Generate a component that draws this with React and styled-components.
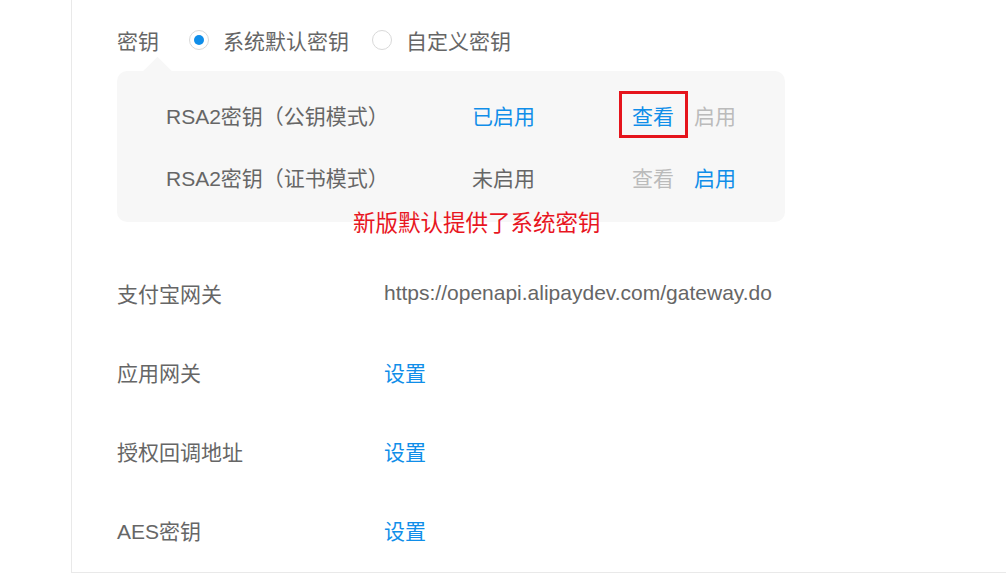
import React from "react";
import styled, { createGlobalStyle } from "styled-components";

const GlobalStyle = createGlobalStyle`
  html, body {
    margin: 0;
    padding: 0;
    background: #fff;
  }
  body {
    font-family: "Liberation Sans", "Noto Sans CJK SC", sans-serif;
    color: #666;
    overflow: hidden;
  }
`;

const Page = styled.div`
  width: 1006px;
  height: 582px;
  overflow: hidden;
`;

const Card = styled.section`
  margin-left: 71px;
  width: 1000px;
  border-left: 1px solid #e9e9e9;
  border-bottom: 1px solid #e9e9e9;
  padding: 25px 0 0 45px;
  box-sizing: border-box;
  height: 573px;
`;

const KeyRow = styled.div`
  display: flex;
  align-items: center;
  height: 30px;
  font-size: 21px;
`;

const Label = styled.span`
  font-size: 21px;
  color: #666;
  width: ${(p) => p.$width || "auto"};
  flex-shrink: 0;
`;

const RadioGroup = styled.div`
  display: flex;
  align-items: center;
  gap: 23px;
  margin-left: 30px;
`;

const RadioOption = styled.label`
  display: flex;
  align-items: center;
  gap: 14px;
  font-size: 21px;
  color: #666;
`;

const RadioCircle = styled.span`
  width: 20px;
  height: 20px;
  box-sizing: border-box;
  border: 1px solid #d9d9d9;
  border-radius: 50%;
  background: #fff;
  display: flex;
  align-items: center;
  justify-content: center;

  &::after {
    content: "";
    width: 10px;
    height: 10px;
    border-radius: 50%;
    background: ${(p) => (p.$checked ? "#108ee9" : "transparent")};
  }
`;

const KeyPanel = styled.div`
  position: relative;
  margin-top: 16px;
  width: 668px;
  height: 151px;
  box-sizing: border-box;
  padding: 13px 0 0 49px;
  background: #f7f7f7;
  border-radius: 10px;

  &::before {
    content: "";
    position: absolute;
    top: -10px;
    left: 30px;
    width: 21px;
    height: 21px;
    background: #f7f7f7;
    transform: rotate(45deg);
  }
`;

const KeyItem = styled.div`
  position: relative;
  display: grid;
  grid-template-columns: 306px 160px auto;
  align-items: center;
  height: 62px;
  font-size: 21px;
`;

const Status = styled.span`
  color: ${(p) => (p.$on ? "#108ee9" : "#666")};
`;

const Actions = styled.div`
  display: flex;
  align-items: center;
  gap: 20px;
`;

const Action = styled.span`
  position: relative;
  color: ${(p) => (p.$disabled ? "#bbb" : "#108ee9")};

  &::after {
    content: "";
    display: ${(p) => (p.$marked ? "block" : "none")};
    position: absolute;
    left: -13px;
    right: -14px;
    top: -9px;
    bottom: -8px;
    border: 3px solid #e5141c;
  }
`;

const Note = styled.span`
  position: absolute;
  left: 236px;
  top: 142px;
  font-size: 22.5px;
  line-height: 22px;
  color: #e8161f;
  white-space: nowrap;
`;

const InfoList = styled.div`
  margin-top: 31px;
`;

const InfoRow = styled.div`
  display: flex;
  align-items: center;
  height: 79px;
`;

const Value = styled.span`
  font-size: 21px;
  color: ${(p) => (p.$link ? "#108ee9" : "#666")};
`;

const keys = [
  { name: "RSA2密钥（公钥模式）", on: true },
  { name: "RSA2密钥（证书模式）", on: false },
];

const infos = [
  { label: "支付宝网关", value: "https://openapi.alipaydev.com/gateway.do" },
  { label: "应用网关", value: "设置", link: true },
  { label: "授权回调地址", value: "设置", link: true },
  { label: "AES密钥", value: "设置", link: true },
];

const App = () => {
  return (
    <Page>
      <GlobalStyle />
      <Card>
        <KeyRow>
          <Label>密钥</Label>
          <RadioGroup>
            <RadioOption>
              <RadioCircle $checked />
              系统默认密钥
            </RadioOption>
            <RadioOption>
              <RadioCircle />
              自定义密钥
            </RadioOption>
          </RadioGroup>
        </KeyRow>

        <KeyPanel>
          {keys.map((k) => (
            <KeyItem key={k.name}>
              <span>{k.name}</span>
              <Status $on={k.on}>{k.on ? "已启用" : "未启用"}</Status>
              <Actions>
                <Action $disabled={!k.on} $marked={k.on}>
                  查看
                </Action>
                <Action $disabled={k.on}>启用</Action>
              </Actions>
            </KeyItem>
          ))}
          <Note>新版默认提供了系统密钥</Note>
        </KeyPanel>

        <InfoList>
          {infos.map((row) => (
            <InfoRow key={row.label}>
              <Label $width="267px">{row.label}</Label>
              <Value $link={row.link}>{row.value}</Value>
            </InfoRow>
          ))}
        </InfoList>
      </Card>
    </Page>
  );
};

export default App;
